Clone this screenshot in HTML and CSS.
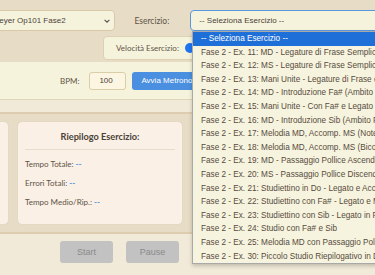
FILE: index.html
```html
<!DOCTYPE html>
<html lang="it">
<head>
<meta charset="utf-8">
<title>Beyer Op101</title>
<link rel="stylesheet" href="styles.css">
</head>
<body>
<div class="page">
  <header class="top">
    <div class="row1">
      <div class="select method">
        <span>Beyer Op101 Fase2</span>
        <svg class="chev" viewBox="0 0 10 6" width="6" height="4"><path d="M1 1l4 4 4-4" fill="none" stroke="#555" stroke-width="1.8"/></svg>
      </div>
      <span class="lbl">Esercizio:</span>
      <div class="select exercise"><span>-- Seleziona Esercizio --</span></div>
    </div>
    <div class="row2">
      <div class="speed">
        <span class="lbl">Velocità Esercizio:</span>
        <span class="thumb"></span>
      </div>
    </div>
  </header>
  <section class="metro">
    <span class="lbl">BPM:</span>
    <span class="bpm">100</span>
    <span class="btn blue">Avvia Metronomo</span>
  </section>
  <section class="cards">
    <div class="card side"></div>
    <div class="card summary">
      <h3>Riepilogo Esercizio:</h3>
      <p>Tempo Totale: <b>--</b></p>
      <p>Errori Totali: <b>--</b></p>
      <p>Tempo Medio/Rip.: <b>--</b></p>
    </div>
  </section>
  <footer class="controls">
    <span class="btn grey">Start</span>
    <span class="btn grey">Pause</span>
    <span class="btn grey"></span>
    <span class="btn blue"></span>
  </footer>
</div>
<ul class="dropdown">
  <li class="sel">-- Seleziona Esercizio --</li>
  <li>Fase 2 - Ex. 11: MD - Legature di Frase Semplici</li>
  <li>Fase 2 - Ex. 12: MS - Legature di Frase Semplici</li>
  <li>Fase 2 - Ex. 13: Mani Unite - Legature di Frase e Staccato</li>
  <li>Fase 2 - Ex. 14: MD - Introduzione Fa# (Ambito Sol)</li>
  <li>Fase 2 - Ex. 15: Mani Unite - Con Fa# e Legato</li>
  <li>Fase 2 - Ex. 16: MD - Introduzione Sib (Ambito Fa)</li>
  <li>Fase 2 - Ex. 17: Melodia MD, Accomp. MS (Note Lunghe)</li>
  <li>Fase 2 - Ex. 18: Melodia MD, Accomp. MS (Bicordi)</li>
  <li>Fase 2 - Ex. 19: MD - Passaggio Pollice Ascendente</li>
  <li>Fase 2 - Ex. 20: MS - Passaggio Pollice Discendente</li>
  <li>Fase 2 - Ex. 21: Studiettino in Do - Legato e Accordi</li>
  <li>Fase 2 - Ex. 22: Studiettino con Fa# - Legato e MS</li>
  <li>Fase 2 - Ex. 23: Studiettino con Sib - Legato in Fa</li>
  <li>Fase 2 - Ex. 24: Studio con Fa# e Sib</li>
  <li>Fase 2 - Ex. 25: Melodia MD con Passaggio Pollice</li>
  <li>Fase 2 - Ex. 30: Piccolo Studio Riepilogativo in Do</li>
</ul>
</body>
</html>
```
FILE: styles.css
```css
* { box-sizing: border-box; }
html, body { margin: 0; padding: 0; }
body {
  width: 375px;
  height: 275px;
  overflow: hidden;
  position: relative;
  background: #f1ead8;
  font-family: Lato, "Liberation Sans", sans-serif;
  color: #5b4f42;
}
.page { margin-left: -16px; width: 420px; }
.top { background: #e7ddc6; padding: 10px 0 2px 0; }
.row1 { display: flex; align-items: center; height: 21px; }
.select {
  height: 21px;
  border-radius: 4px;
  background: #f6f3dd;
  display: flex;
  align-items: center;
  font-family: "Liberation Sans", Arial, sans-serif;
  font-size: 8px;
  color: #4a4238;
}
.method {
  width: 135px;
  border: 1px solid #d8caa8;
  padding: 0 4px 0 9px;
  justify-content: space-between;
}
.lbl { font-size: 8px; color: #5e5346; }
.row1 .lbl { margin-left: 19px; font-size: 8.5px; }
.exercise {
  margin-left: 21px;
  width: 220px;
  border: 1px solid #5b97dc;
  padding-left: 8px;
}
.row2 { display: flex; padding-left: 119px; margin-top: 5px; }
.speed {
  height: 24px;
  width: 300px;
  background: #f6f3dd;
  border: 1px solid #ddd1b2;
  border-radius: 4px;
  display: flex;
  align-items: center;
  padding-left: 12px;
}
.speed .lbl { width: 60px; flex: none; white-space: nowrap; }
.thumb {
  width: 10px; height: 10px; border-radius: 50%;
  background: #1f74f0; margin-left: 9px; flex: none;
}
.metro {
  background: #f6f3dd;
  height: 38px;
  display: flex;
  align-items: center;
  padding-left: 76px;
  border-bottom: 1px solid #e0d4b8;
}
.bpm {
  margin-left: 10px;
  width: 37px; height: 18px;
  background: #fbf5e2;
  border: 1px solid #dccda9;
  border-radius: 3px;
  font-family: "Liberation Sans", Arial, sans-serif;
  font-size: 8px;
  color: #4a4238;
  display: flex; align-items: center; padding-left: 9px;
}
.btn {
  height: 18px;
  border-radius: 3px;
  font-family: "Liberation Sans", Arial, sans-serif;
  font-size: 8px;
  display: inline-flex; align-items: center; justify-content: center;
}
.metro .btn { margin-left: 6px; padding: 0 9px; width: 120px; justify-content: flex-start; }
.blue { background: #4a8fe0; color: #fff; }
.cards {
  margin-top: 12px;
  border-top: 2px solid #ddcdb0;
  border-bottom: 2px solid #ddcdb0;
  background: #e7ddc6;
  display: flex;
  gap: 10px;
  padding: 8px 0 8px 0;
}
.card {
  background: #faf0e5;
  border-radius: 4px;
  height: 102px;
  box-shadow: 0 0 1px rgba(120,100,60,0.25);
}
.side { width: 24px; }
.summary { width: 164px; padding: 6px 7px 0 7px; }
.summary h3 {
  margin: 0;
  font-size: 9.2px;
  font-weight: 700;
  color: #4a4138;
  text-align: center;
  padding: 3px 0 7px 0;
  border-bottom: 1px solid #e8dccb;
}
.summary p { margin: 10px 0 0 0; font-size: 8px; line-height: 9px; color: #5e5346; }
.summary p b { color: #3d8fe8; font-weight: 700; }
.controls { display: flex; gap: 13px; padding: 7px 0 0 76px; }
.controls .btn { width: 53px; height: 22px; font-size: 9px; }
.grey { background: #c2c2c2; color: #8a8a8a; }
.dropdown {
  position: absolute;
  left: 192px; top: 31px;
  width: 200px;
  margin: 0; padding: 0;
  list-style: none;
  background: #f6f4de;
  border: 1px solid #a9a9a9;
  box-shadow: 0 2px 4px rgba(0,0,0,0.2);
  font-family: "Liberation Sans", Arial, sans-serif;
  font-size: 8.2px;
  color: #564b40;
}
.dropdown li { height: 13.6px; line-height: 13.6px; padding-left: 8px; white-space: nowrap; }
.dropdown li.sel { background: #1f6fd8; color: #fff; }
```
